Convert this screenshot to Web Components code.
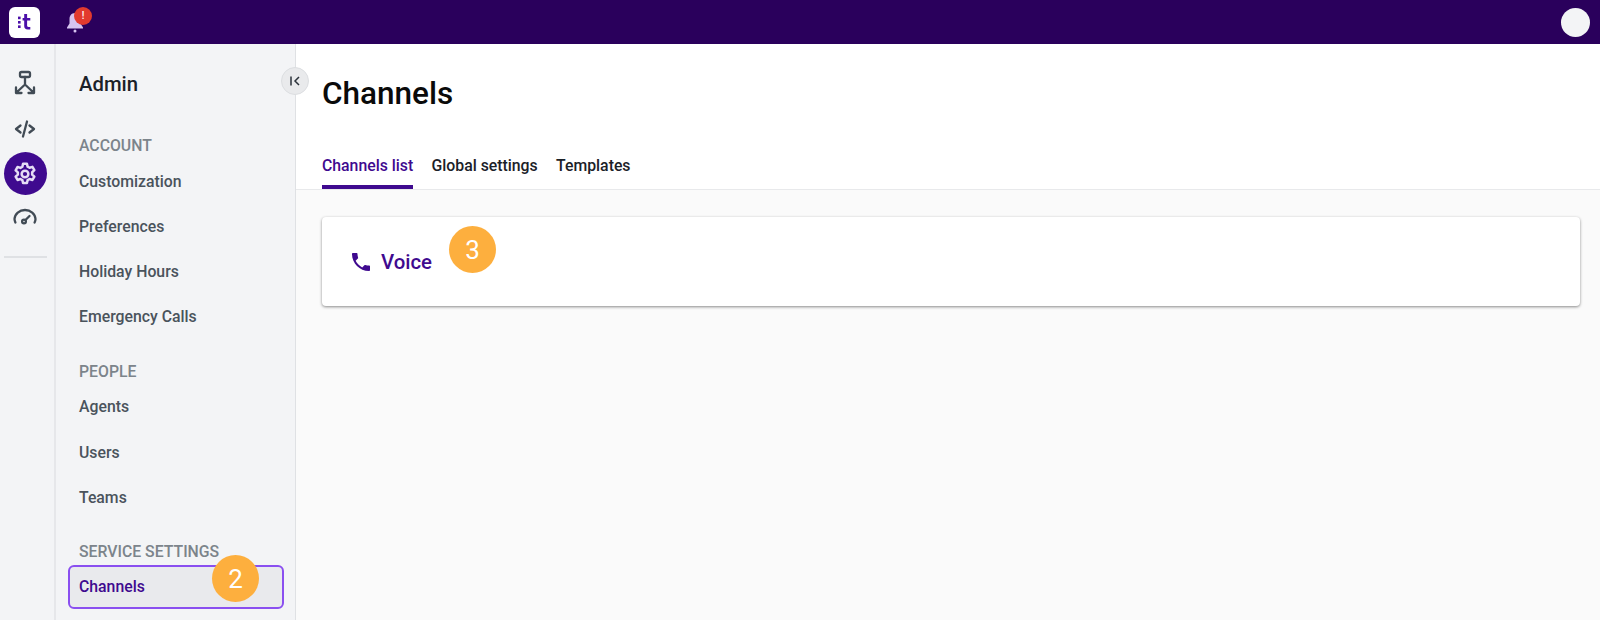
<!DOCTYPE html>
<html>
<head>
<meta charset="utf-8">
<title>Channels</title>
<style>
  html, body { margin: 0; height: 100%; overflow: hidden; }
  body { font-family: Roboto, "Liberation Sans", sans-serif; background: #fff; }
  .page { display: flex; flex-direction: column; height: 620px; }
  .body { display: flex; flex: 1; min-height: 0; }
  nav-item step-badge { left: 142px; top: -12px; }
</style>
</head>
<body>
<div class="page">
  <top-bar></top-bar>
  <div class="body">
    <icon-rail></icon-rail>
    <side-nav heading="Admin">
      <nav-section label="ACCOUNT">
        <nav-item>Customization</nav-item>
        <nav-item>Preferences</nav-item>
        <nav-item>Holiday Hours</nav-item>
        <nav-item>Emergency Calls</nav-item>
      </nav-section>
      <nav-section label="PEOPLE">
        <nav-item>Agents</nav-item>
        <nav-item>Users</nav-item>
        <nav-item>Teams</nav-item>
      </nav-section>
      <nav-section label="SERVICE SETTINGS">
        <nav-item selected>Channels<step-badge slot="badge" n="2"></step-badge></nav-item>
      </nav-section>
    </side-nav>
    <main-panel heading="Channels">
      <voice-card></voice-card>
    </main-panel>
  </div>
</div>

<script>
class TopBar extends HTMLElement {
  constructor() {
    super();
    this.attachShadow({ mode: "open" });
    this.shadowRoot.innerHTML = `
      <style>
        :host { display: flex; align-items: center; height: 44px; flex: none; background: #2a005c; padding: 0 10px 0 9px; }
        .logo { width: 31px; height: 31px; border-radius: 6px; background: #fff; display: flex; align-items: center; justify-content: center; }
        .bell { position: relative; margin-left: 24px; width: 22px; height: 24px; display: flex; }
        .dot { position: absolute; left: 10px; top: -3px; width: 18px; height: 18px; border-radius: 50%; background: #e23a2e; color: #fff; font: 500 10px/18px Roboto, sans-serif; text-align: center; }
        .avatar { margin-left: auto; width: 29px; height: 29px; border-radius: 50%; background: #f3f4f6; }
      </style>
      <div class="logo">
        <svg width="20" height="20" viewBox="0 0 20 20" fill="#4b0fa8">
          <rect x="3" y="4.6" width="2.6" height="2.6"/>
          <rect x="3" y="9" width="2.6" height="2.6"/>
          <rect x="3" y="13.4" width="2.6" height="2.6"/>
          <path d="M9.2 2h2.9v4h3.2v2.6h-3.2v5c0 1 .5 1.4 1.4 1.4h1.8v2.6h-2.5c-2.4 0-3.6-1.2-3.6-3.5V8.6H7.6V6h1.6z"/>
        </svg>
      </div>
      <div class="bell">
        <svg width="22" height="24" viewBox="0 0 22 24" fill="#d6c4f0">
          <path d="M11 3c-3.6 0-5.5 2.8-5.5 6v4.5L3 17.500v1h16v-1l-2.500-4V9c0-3.200-1.900-6-5.500-6z"/>
          <circle cx="11" cy="21" r="1.5"/>
        </svg>
        <span class="dot">!</span>
      </div>
      <div class="avatar"></div>
    `;
  }
}

class IconRail extends HTMLElement {
  constructor() {
    super();
    this.attachShadow({ mode: "open" });
    this.shadowRoot.innerHTML = `
      <style>
        :host { display: flex; flex-direction: column; align-items: center; width: 54px; flex: none; background: #f3f4f6; border-right: 2px solid #e6e7ea; padding-top: 17px; }
        .btn { width: 43px; height: 43px; display: flex; align-items: center; justify-content: center; color: #414b55; border-radius: 50%; margin-left: -4px; }
        .code { margin-top: 3px; }
        .active { margin-top: 2px; background: #3f0a8f; color: #e6dcf5; }
        .gauge { margin-top: -1px; }
        svg { fill: none; stroke: currentColor; stroke-width: 2.3; stroke-linecap: round; stroke-linejoin: round; }
        hr { width: 43px; height: 2px; border: 0; background: #dfe1e4; margin: 19px 0 0 -4px; }
      </style>
      <div class="btn">
        <svg width="24" height="26" viewBox="0 0 24 26">
          <rect x="7" y="2" width="10" height="5" rx="1.5"/>
          <path d="M12 7v7.5M12 14.5L3.5 22.500M12 14.500l8.500 8M3 17.500v5.500h5.500M21 17.500v5.500h-5.500"/>
        </svg>
      </div>
      <div class="btn code">
        <svg width="24" height="20" viewBox="0 0 24 20">
          <path d="M7.5 6.5L3 10l4.500 3.500M16.500 6.500L21 10l-4.500 3.500M14 2.500L10 17.500"/>
        </svg>
      </div>
      <div class="btn active">
        <svg width="26" height="26" viewBox="0 0 24 24">
          <circle cx="12" cy="12" r="3.1"/>
          <path d="M10.2 2.5h3.6l.6 2.7 1.800 1.050 2.650-.85 1.800 3.100-2.050 1.900v2.100l2.050 1.900-1.800 3.100-2.650-.85-1.800 1.050-.6 2.700h-3.600l-.6-2.700-1.800-1.050-2.650.85-1.800-3.100 2.050-1.900V10.500L3.350 8.600l1.800-3.100 2.650.85 1.800-1.050z"/>
        </svg>
      </div>
      <div class="btn gauge">
        <svg width="26" height="18" viewBox="0 0 26 18">
          <path d="M3.4 15.500A10 10 0 0 1 2.500 12 10.500 9.500 0 0 1 13 3a10.500 9.500 0 0 1 10.500 9c0 1.300-.3 2.400-.9 3.500"/>
          <circle cx="12" cy="14.500" r="1.900"/>
          <path d="M13.500 13L17.500 9"/>
        </svg>
      </div>
      <hr>
    `;
  }
}

class SideNav extends HTMLElement {
  constructor() {
    super();
    this.attachShadow({ mode: "open" });
    this.shadowRoot.innerHTML = `
      <style>
        :host { display: block; position: relative; width: 239px; flex: none; background: #f3f4f6; border-right: 1px solid #dfe1e4; }
        h2 { margin: 0; padding: 28px 0 0 23px; font: 500 20.3px/24px Roboto, sans-serif; color: #1b2128; }
        .collapse { position: absolute; right: -14px; top: 23px; width: 26px; height: 26px; border-radius: 50%; background: #e9eaec; border: 1px solid #dcdee1; display: flex; align-items: center; justify-content: center; z-index: 2; }
        .list { padding-top: 40px; }
      </style>
      <h2></h2>
      <div class="collapse">
        <svg width="14" height="14" viewBox="0 0 14 14" fill="none" stroke="#2b323a" stroke-width="1.5">
          <path d="M3 2.5v9M11 3L7 7l4 4"/>
        </svg>
      </div>
      <div class="list"><slot></slot></div>
    `;
    this.shadowRoot.querySelector("h2").textContent = this.getAttribute("heading");
  }
}

class NavSection extends HTMLElement {
  constructor() {
    super();
    this.attachShadow({ mode: "open" });
    this.shadowRoot.innerHTML = `
      <style>
        :host { display: block; margin-bottom: 22px; }
        .label { padding-left: 23px; font: 500 15.8px/20px Roboto, sans-serif; color: #7c848b; margin-bottom: 3px; }
      </style>
      <div class="label"></div>
      <slot></slot>
    `;
    this.shadowRoot.querySelector(".label").textContent = this.getAttribute("label");
  }
}

class NavItem extends HTMLElement {
  constructor() {
    super();
    this.attachShadow({ mode: "open" });
    this.shadowRoot.innerHTML = `
      <style>
        :host { display: flex; align-items: center; position: relative; height: 45.2px; margin: 0 11px 0 14px; padding-left: 9px; box-sizing: border-box; font: 500 15.8px/20px Roboto, sans-serif; color: #4a535c; }
        :host([selected]) { height: 44px; margin-left: 12px; background: #e9eaed; color: #3f0a8f; border: 2px solid #8a4ff0; border-radius: 6px; }
      </style>
      <slot></slot>
      <slot name="badge"></slot>
    `;
  }
}

class StepBadge extends HTMLElement {
  constructor() {
    super();
    this.attachShadow({ mode: "open" });
    this.shadowRoot.innerHTML = `
      <style>
        :host { display: flex; align-items: center; justify-content: center; position: absolute; width: 47px; height: 47px; border-radius: 50%; background: #fdaf3e; color: #fff; font: 400 26px/1 Roboto, sans-serif; }
      </style>
      <span></span>
    `;
    this.shadowRoot.querySelector("span").textContent = this.getAttribute("n");
  }
}

class MainPanel extends HTMLElement {
  constructor() {
    super();
    this.attachShadow({ mode: "open" });
    this.shadowRoot.innerHTML = `
      <style>
        :host { display: flex; flex-direction: column; flex: 1; min-width: 0; background: #fafafa; }
        header { background: #fff; border-bottom: 1px solid #e8e9eb; padding: 29px 0 0 26px; }
        h1 { margin: 0; font: 500 31.5px/42px Roboto, sans-serif; color: #0a0a0a; }
        nav { display: flex; gap: 18.4px; margin-top: 41px; }
        a { font: 500 15.8px/20px Roboto, sans-serif; color: #1b2128; padding: 0 0 9px; border-bottom: 4px solid transparent; }
        a.on { color: #3f0a8f; border-color: #3f0a8f; }
        .content { padding: 27px 20px 0 26px; }
      </style>
      <header>
        <h1></h1>
        <nav>
          <a class="on">Channels list</a>
          <a>Global settings</a>
          <a>Templates</a>
        </nav>
      </header>
      <div class="content"><slot></slot></div>
    `;
    this.shadowRoot.querySelector("h1").textContent = this.getAttribute("heading");
  }
}

class VoiceCard extends HTMLElement {
  constructor() {
    super();
    this.attachShadow({ mode: "open" });
    this.shadowRoot.innerHTML = `
      <style>
        :host { display: flex; align-items: center; height: 89px; box-sizing: border-box; padding: 0 0 0 28px; background: #fff; border-radius: 4px; box-shadow: 0 1px 3px rgba(0,0,0,.45); position: relative; }
        .row { display: flex; align-items: center; gap: 9px; color: #3f0a8f; font: 500 20.4px/24px Roboto, sans-serif; }
        svg { fill: currentColor; display: block; }
        step-badge { left: 127px; top: 9px; }
      </style>
      <div class="row">
        <svg width="22" height="22" viewBox="1 1 22 22">
          <path d="M6.62 10.79c1.44 2.83 3.76 5.14 6.59 6.59l2.2-2.2c.27-.27.67-.36 1.02-.24 1.12.37 2.33.57 3.57.57.55 0 1 .45 1 1V20c0 .55-.45 1-1 1-9.39 0-17-7.61-17-17 0-.55.45-1 1-1h3.5c.55 0 1 .45 1 1 0 1.25.2 2.45.57 3.57.11.35.03.74-.25 1.02l-2.2 2.2z"/>
        </svg>
        <span>Voice</span>
      </div>
      <step-badge n="3"></step-badge>
    `;
  }
}

customElements.define("top-bar", TopBar);
customElements.define("icon-rail", IconRail);
customElements.define("side-nav", SideNav);
customElements.define("nav-section", NavSection);
customElements.define("nav-item", NavItem);
customElements.define("step-badge", StepBadge);
customElements.define("main-panel", MainPanel);
customElements.define("voice-card", VoiceCard);
</script>
</body>
</html>
